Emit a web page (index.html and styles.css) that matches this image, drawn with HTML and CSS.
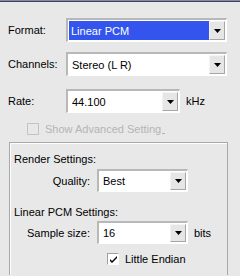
FILE: index.html
```html
<!DOCTYPE html>
<html>
<head>
<meta charset="utf-8">
<link rel="stylesheet" href="styles.css">
</head>
<body>
<div class="titlebar"></div>
<div class="form">
  <div class="row row-format">
    <span class="lbl">Format:</span>
    <div class="combo combo-wide">
      <span class="val sel">Linear PCM</span>
      <span class="btn"><svg width="7" height="4" viewBox="0 0 7 4"><path d="M0 0h7L3.5 4z" fill="#000"/></svg></span>
    </div>
  </div>
  <div class="row row-channels">
    <span class="lbl">Channels:</span>
    <div class="combo combo-wide">
      <span class="val">Stereo (L R)</span>
      <span class="btn"><svg width="7" height="4" viewBox="0 0 7 4"><path d="M0 0h7L3.5 4z" fill="#000"/></svg></span>
    </div>
  </div>
  <div class="row row-rate">
    <span class="lbl">Rate:</span>
    <div class="combo combo-rate">
      <span class="val">44.100</span>
      <span class="btn"><svg width="7" height="4" viewBox="0 0 7 4"><path d="M0 0h7L3.5 4z" fill="#000"/></svg></span>
    </div>
    <span class="unit">kHz</span>
  </div>
  <div class="check-row check-adv">
    <span class="box disabled"></span>
    <span class="check-text disabled-text">Show Advanced Setting<span class="trail"></span></span>
  </div>
  <div class="group">
    <div class="group-title">Render Settings:</div>
    <div class="grow row-quality">
      <span class="glbl">Quality:</span>
      <div class="combo combo-small">
        <span class="val">Best</span>
        <span class="btn"><svg width="7" height="4" viewBox="0 0 7 4"><path d="M0 0h7L3.5 4z" fill="#000"/></svg></span>
      </div>
    </div>
    <div class="group-title title-pcm">Linear PCM Settings:</div>
    <div class="grow row-sample">
      <span class="glbl">Sample size:</span>
      <div class="combo combo-small">
        <span class="val">16</span>
        <span class="btn"><svg width="7" height="4" viewBox="0 0 7 4"><path d="M0 0h7L3.5 4z" fill="#000"/></svg></span>
      </div>
      <span class="unit">bits</span>
    </div>
    <div class="check-row check-endian">
      <span class="box checked"><svg width="9" height="9" viewBox="0 0 9 9"><path d="M1 4l2 2 5-5v2l-5 5-2-2z" fill="#000"/></svg></span>
      <span class="check-text">Little Endian</span>
    </div>
  </div>
</div>
</body>
</html>
```

FILE: styles.css
```css
html, body {
  margin: 0;
  padding: 0;
}
body {
  width: 240px;
  height: 276px;
  overflow: hidden;
  background: #e8e8e8;
  font-family: "Liberation Sans", Arial, sans-serif;
  font-size: 11px;
  color: #000;
}
.titlebar {
  height: 1px;
  border-top: 1px solid #8c8c8c;
  background: #3b3f73;
}
.form {
  padding: 16px 0 0 8px;
}
.row {
  display: flex;
  align-items: center;
}
.lbl {
  width: 58px;
}
.row-channels {
  margin-top: 10px;
}
.row-rate {
  margin-top: 13px;
}
.combo {
  display: flex;
  box-sizing: border-box;
  height: 24px;
  border-style: solid;
  border-width: 2px 1px 1px 2px;
  border-color: #b8b8b8 #ffffff #ffffff #b8b8b8;
  background: #fff;
  padding: 1px;
}
.combo-wide {
  width: 161px;
}
.combo-rate {
  width: 114px;
}
.combo-small {
  width: 91px;
  height: 23px;
}
.val {
  flex: 1;
  display: flex;
  align-items: center;
  padding-left: 3px;
}
.val.sel {
  background: #3355ee;
  color: #fff;
  padding-left: 2px;
}
.btn {
  width: 16px;
  box-sizing: border-box;
  display: flex;
  align-items: center;
  justify-content: center;
  background: #e6e6e6;
  border-right: 1px solid #a6a6a6;
  border-bottom: 1px solid #a6a6a6;
  border-top: 1px solid #f4f4f4;
  border-left: 1px solid #f4f4f4;
}
.unit {
  margin-left: 6px;
}
.check-row {
  display: flex;
  align-items: center;
}
.check-adv {
  margin: 10px 0 0 19px;
}
.box {
  width: 12px;
  height: 12px;
  box-sizing: border-box;
  display: flex;
  align-items: center;
  justify-content: center;
}
.box.disabled {
  border: 1px solid #c4c4c4;
  background: #e8e8e8;
}
.box.checked {
  border-style: solid;
  border-width: 1px;
  border-color: #a0a0a0 #fff #fff #a0a0a0;
  background: #fff;
}
.check-text {
  margin-left: 6px;
}
.disabled-text {
  color: #b4b4b4;
}
.trail {
  display: inline-block;
  width: 3px;
  height: 1px;
  background: #b4b4b4;
  margin-left: 1px;
  vertical-align: -1px;
}
.group {
  margin: 7px 0 0 1px;
  width: 219px;
  height: 133px;
  box-sizing: border-box;
  border: 1px solid #a8a8a8;
  border-bottom: none;
  box-shadow: inset 1px 1px 0 #fff;
  padding: 9px 0 0 4px;
}
.group-title {
  line-height: 14px;
}
.title-pcm {
  margin-top: 13px;
}
.grow {
  display: flex;
  align-items: center;
}
.glbl {
  width: 83px;
  text-align: right;
  padding-right: 7px;
  box-sizing: border-box;
}
.row-quality {
  margin-top: 3px;
}
.row-sample {
  margin-top: 2px;
}
.check-endian {
  margin: 9px 0 0 93px;
}
```
